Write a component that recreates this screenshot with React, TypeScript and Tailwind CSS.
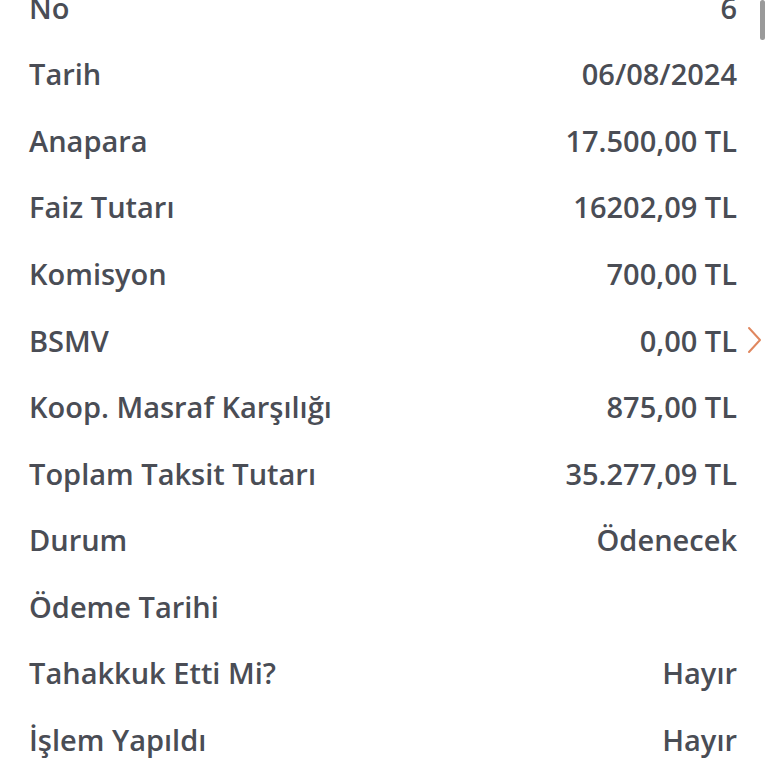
import React from "react";

const rows: [string, string][] = [
  ["No", "6"],
  ["Tarih", "06/08/2024"],
  ["Anapara", "17.500,00 TL"],
  ["Faiz Tutarı", "16202,09 TL"],
  ["Komisyon", "700,00 TL"],
  ["BSMV", "0,00 TL"],
  ["Koop. Masraf Karşılığı", "875,00 TL"],
  ["Toplam Taksit Tutarı", "35.277,09 TL"],
  ["Durum", "Ödenecek"],
  ["Ödeme Tarihi", ""],
  ["Tahakkuk Etti Mi?", "Hayır"],
  ["İşlem Yapıldı", "Hayır"],
];

export default function App() {
  return (
    <div
      className="relative w-[768px] h-[768px] overflow-hidden bg-white"
      style={{ fontFamily: '"Open Sans", "Noto Sans", sans-serif' }}
    >
      <div className="-mt-[26px] flex flex-col">
        {rows.map(([label, value], i) => (
          <div
            key={i}
            className="relative flex h-[66.6px] items-center justify-between pl-[29px] pr-[31px] text-[29px] font-semibold text-[#4a4d55]"
          >
            <span>{label}</span>
            <span>{value}</span>
            {label === "BSMV" && (
              <svg
                className="absolute right-[6px] top-1/2 -translate-y-1/2"
                width="15"
                height="28"
                viewBox="0 0 15 28"
                fill="none"
              >
                <path d="M2 2 L13 14 L2 26" stroke="#e0875f" strokeWidth="2" strokeLinecap="round" strokeLinejoin="round" />
              </svg>
            )}
          </div>
        ))}
      </div>
      <div className="absolute right-[3px] top-0 h-[40px] w-[5px] rounded-full bg-[#9a9a9a]" />
    </div>
  );
}
